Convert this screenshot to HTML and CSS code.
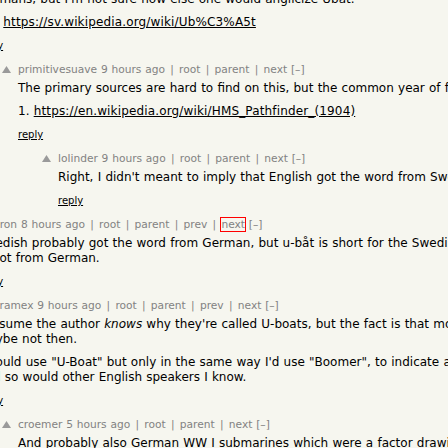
FILE: index.html
```html
<!DOCTYPE html>
<html>
<head>
<meta charset="utf-8">
<link rel="stylesheet" href="styles.css">
</head>
<body>
<div class="thread">
  <div class="comment">
    <div class="ind"></div>
    <div class="vote"></div>
    <div class="body">
      <div class="text first">
        <p>Germans, but I'm not sure how else one would anglicize Ubat.</p>
        <p>[1]: <a href="#">https://sv.wikipedia.org/wiki/Ub%C3%A5t</a></p>
      </div>
      <div class="reply"><a href="#">reply</a></div>
    </div>
  </div>

  <div class="comment">
    <div class="ind l1"></div>
    <div class="vote"><svg class="arrow" width="9" height="7" viewBox="0 0 9 7"><path d="M4.5 0 L9 7 L0 7 Z"/></svg></div>
    <div class="body">
      <div class="meta"><a href="#">primitivesuave</a> <a href="#">9 hours ago</a> <span class="sep">|</span> <a href="#">root</a> <span class="sep">|</span> <a href="#">parent</a> <span class="sep">|</span> <a href="#">next</a> <a href="#">[–]</a></div>
      <div class="text">
        <p>The primary sources are hard to find on this, but the common year of first use is usually given as 1904.</p>
        <p>1. <a href="#">https://en.wikipedia.org/wiki/HMS_Pathfinder_(1904)</a></p>
      </div>
      <div class="reply"><a href="#">reply</a></div>
    </div>
  </div>

  <div class="comment">
    <div class="ind l2"></div>
    <div class="vote"><svg class="arrow" width="9" height="7" viewBox="0 0 9 7"><path d="M4.5 0 L9 7 L0 7 Z"/></svg></div>
    <div class="body">
      <div class="meta"><a href="#">lolinder</a> <a href="#">9 hours ago</a> <span class="sep">|</span> <a href="#">root</a> <span class="sep">|</span> <a href="#">parent</a> <span class="sep">|</span> <a href="#">next</a> <a href="#">[–]</a></div>
      <div class="text">
        <p>Right, I didn't meant to imply that English got the word from Swedish.</p>
      </div>
      <div class="reply"><a href="#">reply</a></div>
    </div>
  </div>

  <div class="comment">
    <div class="ind"></div>
    <div class="vote"><svg class="arrow" width="9" height="7" viewBox="0 0 9 7"><path d="M4.5 0 L9 7 L0 7 Z"/></svg></div>
    <div class="body">
      <div class="meta"><a href="#">Oberon</a> <a href="#">8 hours ago</a> <span class="sep">|</span> <a href="#">root</a> <span class="sep">|</span> <a href="#">parent</a> <span class="sep">|</span> <a href="#">prev</a> <span class="sep">|</span> <a href="#" class="focus">next</a> <a href="#">[–]</a></div>
      <div class="text">
        <p>Swedish probably got the word from German, but u-båt is short for the Swedish undervattensbåt, so it<br>is not from German.</p>
      </div>
      <div class="reply"><a href="#">reply</a></div>
    </div>
  </div>

  <div class="comment">
    <div class="ind"></div>
    <div class="vote"><svg class="arrow" width="9" height="7" viewBox="0 0 9 7"><path d="M4.5 0 L9 7 L0 7 Z"/></svg></div>
    <div class="body">
      <div class="meta"><a href="#">lockramex</a> <a href="#">9 hours ago</a> <span class="sep">|</span> <a href="#">root</a> <span class="sep">|</span> <a href="#">parent</a> <span class="sep">|</span> <a href="#">prev</a> <span class="sep">|</span> <a href="#">next</a> <a href="#">[–]</a></div>
      <div class="text">
        <p>I assume the author <i>knows</i> why they're called U-boats, but the fact is that most people don't.<br>Maybe not then.</p>
        <p>I would use "U-Boat" but only in the same way I'd use "Boomer", to indicate a certain age,<br>and so would other English speakers I know.</p>
      </div>
      <div class="reply"><a href="#">reply</a></div>
    </div>
  </div>

  <div class="comment">
    <div class="ind l1"></div>
    <div class="vote"><svg class="arrow" width="9" height="7" viewBox="0 0 9 7"><path d="M4.5 0 L9 7 L0 7 Z"/></svg></div>
    <div class="body">
      <div class="meta"><a href="#">croemer</a> <a href="#">5 hours ago</a> <span class="sep">|</span> <a href="#">root</a> <span class="sep">|</span> <a href="#">parent</a> <span class="sep">|</span> <a href="#">next</a> <a href="#">[–]</a></div>
      <div class="text">
        <p>And probably also German WW I submarines which were a factor drawing the US into the war.</p>
      </div>
      <div class="reply"><a href="#">reply</a></div>
    </div>
  </div>
</div>
</body>
</html>
```
FILE: styles.css
```css
html, body {
  margin: 0;
  padding: 0;
  background: #f6f6ef;
  overflow: hidden;
}

body {
  font-family: "DejaVu Sans", Verdana, sans-serif;
  color: #000;
}

.thread {
  display: flex;
  flex-direction: column;
  gap: 11px;
  margin-left: -40px;
  margin-top: -8px;
}

.comment {
  display: flex;
  align-items: flex-start;
}

.ind {
  flex-shrink: 0;
  width: 0;
}

.ind.l1 { width: 40px; }
.ind.l2 { width: 80px; }

.vote {
  flex-shrink: 0;
  width: 18px;
  padding-top: 3px;
}

.arrow {
  display: block;
  margin-left: 2px;
  fill: #9a9a9a;
}

.body {
  display: flex;
  flex-direction: column;
  white-space: nowrap;
}

.meta {
  font-size: 10.67px;
  line-height: 13px;
  word-spacing: 0.36px;
  color: #828282;
}

.meta a {
  color: #828282;
  text-decoration: none;
}

.meta .sep {
  margin: 0 1.5px;
}

.meta a.focus {
  outline: 1px solid #ff0000;
}

.text {
  margin-top: 5px;
  font-size: 12px;
  line-height: 15px;
  word-spacing: 0.4px;
}

.text.first {
  margin-top: 0;
}

.text p {
  margin: 8px 0 0;
}

.text p:first-child {
  margin-top: 0;
}

.text a {
  color: #000;
  text-decoration: underline;
  letter-spacing: 0.15px;
}

.reply {
  margin-top: 9px;
  font-size: 10px;
  line-height: 13px;
}

.reply a {
  color: #000;
  text-decoration: underline;
}
```
